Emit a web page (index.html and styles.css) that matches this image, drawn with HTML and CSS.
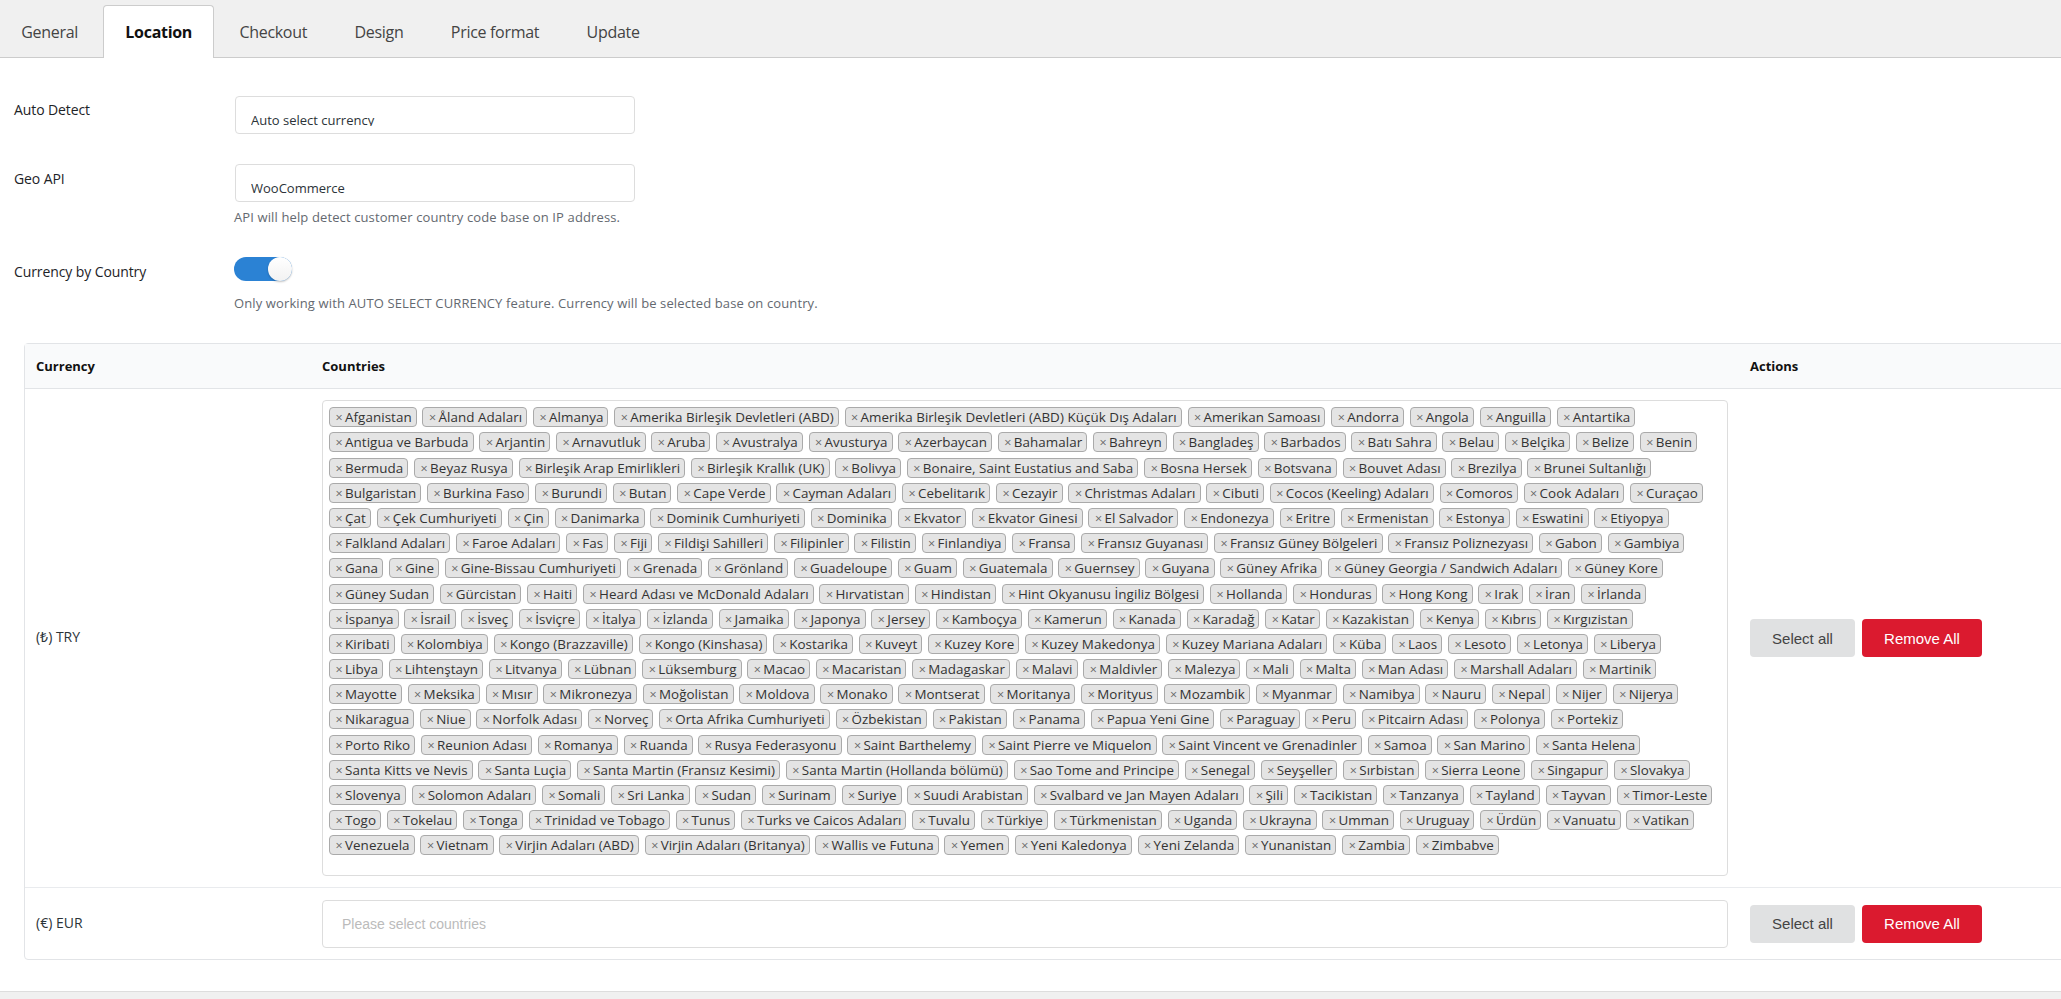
FILE: index.html
```html
<!DOCTYPE html>
<html lang="tr">
<head>
<meta charset="utf-8">
<title>Location settings</title>
<link rel="stylesheet" href="styles.css">
</head>
<body>
<nav class="tabs">
  <a class="tab">General</a>
  <a class="tab active">Location</a>
  <a class="tab">Checkout</a>
  <a class="tab">Design</a>
  <a class="tab">Price format</a>
  <a class="tab">Update</a>
</nav>
<main class="content">
  <section class="form-row row-auto">
    <label class="form-label">Auto Detect</label>
    <div class="field"><div class="select-box"><span class="select-value">Auto select currency</span></div></div>
  </section>
  <section class="form-row row-geo">
    <label class="form-label geo-label">Geo API</label>
    <div class="field">
      <div class="select-box"><span class="select-value">WooCommerce</span></div>
      <p class="help">API will help detect customer country code base on IP address.</p>
    </div>
  </section>
  <section class="form-row row-toggle">
    <label class="form-label toggle-label">Currency by Country</label>
    <div class="field">
      <div class="toggle"><span class="knob"></span></div>
      <p class="help help-toggle">Only working with AUTO SELECT CURRENCY feature. Currency will be selected base on country.</p>
    </div>
  </section>
  <section class="card">
    <div class="card-row card-head">
      <div class="cell-currency">Currency</div>
      <div class="cell-countries">Countries</div>
      <div class="cell-actions">Actions</div>
    </div>
    <div class="card-row row-try">
      <div class="cell-currency cell-code">(₺) TRY</div>
      <div class="cell-countries">
        <div class="multi">
          <div class="tag-row"><span class="tag">Afganistan</span><span class="tag">Åland Adaları</span><span class="tag">Almanya</span><span class="tag">Amerika Birleşik Devletleri (ABD)</span><span class="tag">Amerika Birleşik Devletleri (ABD) Küçük Dış Adaları</span><span class="tag">Amerikan Samoası</span><span class="tag">Andorra</span><span class="tag">Angola</span><span class="tag">Anguilla</span><span class="tag">Antartika</span></div>
          <div class="tag-row"><span class="tag">Antigua ve Barbuda</span><span class="tag">Arjantin</span><span class="tag">Arnavutluk</span><span class="tag">Aruba</span><span class="tag">Avustralya</span><span class="tag">Avusturya</span><span class="tag">Azerbaycan</span><span class="tag">Bahamalar</span><span class="tag">Bahreyn</span><span class="tag">Bangladeş</span><span class="tag">Barbados</span><span class="tag">Batı Sahra</span><span class="tag">Belau</span><span class="tag">Belçika</span><span class="tag">Belize</span><span class="tag">Benin</span></div>
          <div class="tag-row"><span class="tag">Bermuda</span><span class="tag">Beyaz Rusya</span><span class="tag">Birleşik Arap Emirlikleri</span><span class="tag">Birleşik Krallık (UK)</span><span class="tag">Bolivya</span><span class="tag">Bonaire, Saint Eustatius and Saba</span><span class="tag">Bosna Hersek</span><span class="tag">Botsvana</span><span class="tag">Bouvet Adası</span><span class="tag">Brezilya</span><span class="tag">Brunei Sultanlığı</span></div>
          <div class="tag-row"><span class="tag">Bulgaristan</span><span class="tag">Burkina Faso</span><span class="tag">Burundi</span><span class="tag">Butan</span><span class="tag">Cape Verde</span><span class="tag">Cayman Adaları</span><span class="tag">Cebelitarık</span><span class="tag">Cezayir</span><span class="tag">Christmas Adaları</span><span class="tag">Cibuti</span><span class="tag">Cocos (Keeling) Adaları</span><span class="tag">Comoros</span><span class="tag">Cook Adaları</span><span class="tag">Curaçao</span></div>
          <div class="tag-row"><span class="tag">Çat</span><span class="tag">Çek Cumhuriyeti</span><span class="tag">Çin</span><span class="tag">Danimarka</span><span class="tag">Dominik Cumhuriyeti</span><span class="tag">Dominika</span><span class="tag">Ekvator</span><span class="tag">Ekvator Ginesi</span><span class="tag">El Salvador</span><span class="tag">Endonezya</span><span class="tag">Eritre</span><span class="tag">Ermenistan</span><span class="tag">Estonya</span><span class="tag">Eswatini</span><span class="tag">Etiyopya</span></div>
          <div class="tag-row"><span class="tag">Falkland Adaları</span><span class="tag">Faroe Adaları</span><span class="tag">Fas</span><span class="tag">Fiji</span><span class="tag">Fildişi Sahilleri</span><span class="tag">Filipinler</span><span class="tag">Filistin</span><span class="tag">Finlandiya</span><span class="tag">Fransa</span><span class="tag">Fransız Guyanası</span><span class="tag">Fransız Güney Bölgeleri</span><span class="tag">Fransız Poliznezyası</span><span class="tag">Gabon</span><span class="tag">Gambiya</span></div>
          <div class="tag-row"><span class="tag">Gana</span><span class="tag">Gine</span><span class="tag">Gine-Bissau Cumhuriyeti</span><span class="tag">Grenada</span><span class="tag">Grönland</span><span class="tag">Guadeloupe</span><span class="tag">Guam</span><span class="tag">Guatemala</span><span class="tag">Guernsey</span><span class="tag">Guyana</span><span class="tag">Güney Afrika</span><span class="tag">Güney Georgia / Sandwich Adaları</span><span class="tag">Güney Kore</span></div>
          <div class="tag-row"><span class="tag">Güney Sudan</span><span class="tag">Gürcistan</span><span class="tag">Haiti</span><span class="tag">Heard Adası ve McDonald Adaları</span><span class="tag">Hırvatistan</span><span class="tag">Hindistan</span><span class="tag">Hint Okyanusu İngiliz Bölgesi</span><span class="tag">Hollanda</span><span class="tag">Honduras</span><span class="tag">Hong Kong</span><span class="tag">Irak</span><span class="tag">İran</span><span class="tag">İrlanda</span></div>
          <div class="tag-row"><span class="tag">İspanya</span><span class="tag">İsrail</span><span class="tag">İsveç</span><span class="tag">İsviçre</span><span class="tag">İtalya</span><span class="tag">İzlanda</span><span class="tag">Jamaika</span><span class="tag">Japonya</span><span class="tag">Jersey</span><span class="tag">Kamboçya</span><span class="tag">Kamerun</span><span class="tag">Kanada</span><span class="tag">Karadağ</span><span class="tag">Katar</span><span class="tag">Kazakistan</span><span class="tag">Kenya</span><span class="tag">Kıbrıs</span><span class="tag">Kırgızistan</span></div>
          <div class="tag-row"><span class="tag">Kiribati</span><span class="tag">Kolombiya</span><span class="tag">Kongo (Brazzaville)</span><span class="tag">Kongo (Kinshasa)</span><span class="tag">Kostarika</span><span class="tag">Kuveyt</span><span class="tag">Kuzey Kore</span><span class="tag">Kuzey Makedonya</span><span class="tag">Kuzey Mariana Adaları</span><span class="tag">Küba</span><span class="tag">Laos</span><span class="tag">Lesoto</span><span class="tag">Letonya</span><span class="tag">Liberya</span></div>
          <div class="tag-row"><span class="tag">Libya</span><span class="tag">Lihtenştayn</span><span class="tag">Litvanya</span><span class="tag">Lübnan</span><span class="tag">Lüksemburg</span><span class="tag">Macao</span><span class="tag">Macaristan</span><span class="tag">Madagaskar</span><span class="tag">Malavi</span><span class="tag">Maldivler</span><span class="tag">Malezya</span><span class="tag">Mali</span><span class="tag">Malta</span><span class="tag">Man Adası</span><span class="tag">Marshall Adaları</span><span class="tag">Martinik</span></div>
          <div class="tag-row"><span class="tag">Mayotte</span><span class="tag">Meksika</span><span class="tag">Mısır</span><span class="tag">Mikronezya</span><span class="tag">Moğolistan</span><span class="tag">Moldova</span><span class="tag">Monako</span><span class="tag">Montserat</span><span class="tag">Moritanya</span><span class="tag">Morityus</span><span class="tag">Mozambik</span><span class="tag">Myanmar</span><span class="tag">Namibya</span><span class="tag">Nauru</span><span class="tag">Nepal</span><span class="tag">Nijer</span><span class="tag">Nijerya</span></div>
          <div class="tag-row"><span class="tag">Nikaragua</span><span class="tag">Niue</span><span class="tag">Norfolk Adası</span><span class="tag">Norveç</span><span class="tag">Orta Afrika Cumhuriyeti</span><span class="tag">Özbekistan</span><span class="tag">Pakistan</span><span class="tag">Panama</span><span class="tag">Papua Yeni Gine</span><span class="tag">Paraguay</span><span class="tag">Peru</span><span class="tag">Pitcairn Adası</span><span class="tag">Polonya</span><span class="tag">Portekiz</span></div>
          <div class="tag-row"><span class="tag">Porto Riko</span><span class="tag">Reunion Adası</span><span class="tag">Romanya</span><span class="tag">Ruanda</span><span class="tag">Rusya Federasyonu</span><span class="tag">Saint Barthelemy</span><span class="tag">Saint Pierre ve Miquelon</span><span class="tag">Saint Vincent ve Grenadinler</span><span class="tag">Samoa</span><span class="tag">San Marino</span><span class="tag">Santa Helena</span></div>
          <div class="tag-row"><span class="tag">Santa Kitts ve Nevis</span><span class="tag">Santa Luçia</span><span class="tag">Santa Martin (Fransız Kesimi)</span><span class="tag">Santa Martin (Hollanda bölümü)</span><span class="tag">Sao Tome and Principe</span><span class="tag">Senegal</span><span class="tag">Seyşeller</span><span class="tag">Sırbistan</span><span class="tag">Sierra Leone</span><span class="tag">Singapur</span><span class="tag">Slovakya</span></div>
          <div class="tag-row"><span class="tag">Slovenya</span><span class="tag">Solomon Adaları</span><span class="tag">Somali</span><span class="tag">Sri Lanka</span><span class="tag">Sudan</span><span class="tag">Surinam</span><span class="tag">Suriye</span><span class="tag">Suudi Arabistan</span><span class="tag">Svalbard ve Jan Mayen Adaları</span><span class="tag">Şili</span><span class="tag">Tacikistan</span><span class="tag">Tanzanya</span><span class="tag">Tayland</span><span class="tag">Tayvan</span><span class="tag">Timor-Leste</span></div>
          <div class="tag-row"><span class="tag">Togo</span><span class="tag">Tokelau</span><span class="tag">Tonga</span><span class="tag">Trinidad ve Tobago</span><span class="tag">Tunus</span><span class="tag">Turks ve Caicos Adaları</span><span class="tag">Tuvalu</span><span class="tag">Türkiye</span><span class="tag">Türkmenistan</span><span class="tag">Uganda</span><span class="tag">Ukrayna</span><span class="tag">Umman</span><span class="tag">Uruguay</span><span class="tag">Ürdün</span><span class="tag">Vanuatu</span><span class="tag">Vatikan</span></div>
          <div class="tag-row"><span class="tag">Venezuela</span><span class="tag">Vietnam</span><span class="tag">Virjin Adaları (ABD)</span><span class="tag">Virjin Adaları (Britanya)</span><span class="tag">Wallis ve Futuna</span><span class="tag">Yemen</span><span class="tag">Yeni Kaledonya</span><span class="tag">Yeni Zelanda</span><span class="tag">Yunanistan</span><span class="tag">Zambia</span><span class="tag">Zimbabve</span></div>
        </div>
      </div>
      <div class="cell-actions"><button class="btn btn-grey">Select all</button><button class="btn btn-red">Remove All</button></div>
    </div>
    <div class="card-row row-eur">
      <div class="cell-currency cell-code">(€) EUR</div>
      <div class="cell-countries"><div class="multi multi-empty">Please select countries</div></div>
      <div class="cell-actions"><button class="btn btn-grey">Select all</button><button class="btn btn-red">Remove All</button></div>
    </div>
  </section>
</main>
<footer class="foot"></footer>
</body>
</html>
```
FILE: styles.css
```css
* { box-sizing: border-box; }
html, body { margin: 0; padding: 0; }
body {
  width: 2061px;
  height: 999px;
  overflow: hidden;
  background: #fff;
  color: #2c3338;
  font: 13px/18px "Open Sans", sans-serif;
}
.tabs {
  display: flex;
  gap: 3px;
  height: 58px;
  padding: 5px 0 0 0;
  background: #f0f0f0;
  border-bottom: 1px solid #ccc;
}
.tab {
  height: 53px;
  padding: 0 21.2px;
  font-size: 16px;
  letter-spacing: -0.3px;
  line-height: 52px;
  color: #444;
  border: 1px solid transparent;
  border-bottom: 0;
  border-radius: 4px 4px 0 0;
}
.tab:first-child { margin-left: -1px; }
.active {
  background: #fff;
  color: #111;
  font-weight: 700;
  border-color: #ccc;
}
.content { padding: 38px 0 0 0; }
.form-row {
  display: grid;
  grid-template-columns: 234px 420px;
  color: #1d2327;
}
.form-label { padding: 5px 0 0 14px; font-size: 14px; letter-spacing: -0.1px; }
.geo-label { padding-top: 6px; }
.row-auto { height: 68px; }
.row-geo { height: 93px; }
.row-toggle { height: 86px; }
.toggle-label { padding-top: 6px; }
.select-box {
  height: 38px;
  width: 400px;
  margin-left: 1px;
  padding: 14px 15px 0;
  border: 1px solid #ddd;
  border-radius: 4px;
  background: #fff;
  color: #2c3338;
  white-space: nowrap;
}
.select-value { display: block; height: 15px; overflow: hidden; }
.help { margin: 6px 0 0; color: #646970; letter-spacing: 0.12px; white-space: nowrap; }
.help-toggle { margin-top: 13px; }
.toggle {
  width: 58px;
  height: 24px;
  display: flex;
  justify-content: flex-end;
  border-radius: 12px;
  background: #2b82d4;
}
.knob {
  width: 24px;
  height: 24px;
  border-radius: 50%;
  background: linear-gradient(#fff, #f2f2f2);
  box-shadow: 0 1px 2px rgba(0,0,0,.25);
}
.card {
  width: 2100px;
  margin-left: 24px;
  border: 1px solid #e2e4e7;
  border-radius: 4px;
}
.card-row {
  display: grid;
  grid-template-columns: 297px 1428px 1fr;
  align-items: center;
}
.card-head {
  height: 45px;
  background: #f9fafb;
  border-bottom: 1px solid #e2e4e7;
  font-weight: 700;
  color: #111;
}
.row-try { height: 499px; border-bottom: 1px solid #e9ebee; }
.row-eur { height: 71px; }
.cell-currency { padding-left: 11px; }
.cell-code { font-size: 14px; padding-bottom: 2px; }
.cell-actions { display: flex; gap: 7px; }
.multi {
  width: 1406px;
  height: 476px;
  padding: 2px 6px;
  border: 1px solid #ddd;
  border-radius: 4px;
  background: #fff;
}
.multi-empty {
  height: 48px;
  padding: 0 0 0 19px;
  color: #bbb;
  font: 14px/46px "Liberation Sans", sans-serif;
}
.tag-row {
  display: flex;
  gap: 5.8px;
  margin-top: 4.2px;
  height: 21px;
  white-space: nowrap;
}
.tag {
  height: 20px;
  padding: 0 4px 0 5.5px;
  background: #e4e4e4;
  border: 1px solid #aaa;
  border-radius: 4px;
  color: #333;
  font-size: 13.4px;
  letter-spacing: 0.06px;
  line-height: 18px;
}
.tag::before {
  content: "×";
  display: inline-block;
  width: 9.5px;
  color: #666;
  font-size: 12.5px;
  line-height: 14px;
}
.btn {
  height: 38px;
  border: 0;
  border-radius: 4px;
  font: 15px "Liberation Sans", sans-serif;
}
.btn-grey { width: 105px; background: #e0e1e2; color: #444; }
.btn-red { width: 120px; background: #db1a2f; color: #fff; }
.foot {
  position: fixed;
  left: 0;
  right: 0;
  bottom: 0;
  height: 8px;
  background: #f0f0f0;
  border-top: 1px solid #ddd;
}
```
